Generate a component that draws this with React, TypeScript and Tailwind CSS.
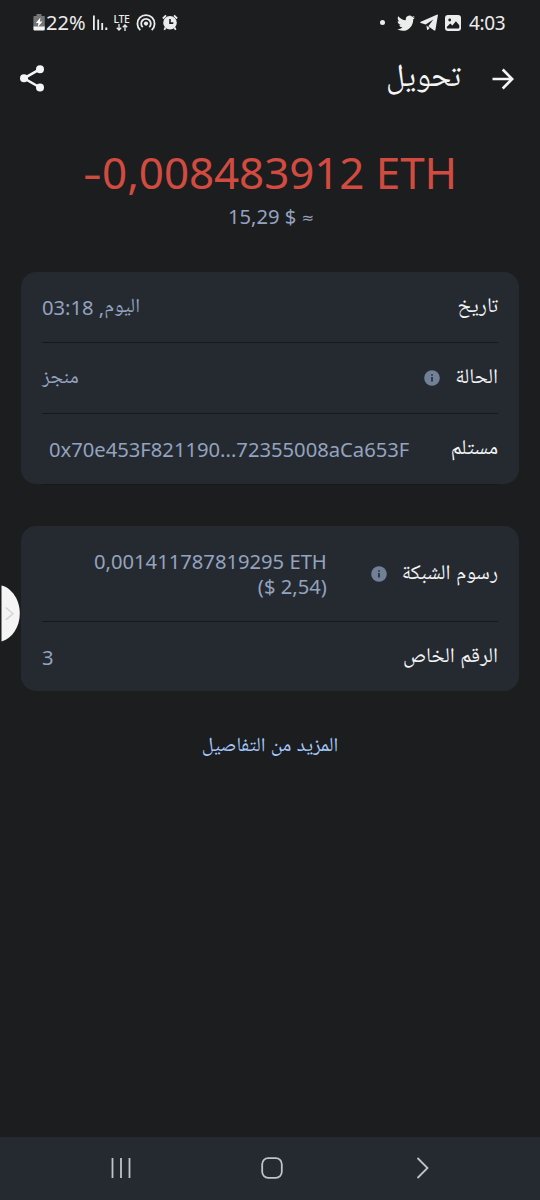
import type { ReactNode } from 'react';

function InfoIcon() {
  return (
    <svg width="16" height="16" viewBox="0 0 16 16" className="shrink-0">
      <circle cx="8" cy="8" r="7.8" fill="#718096" />
      <path d="M8 7v4.6M8 4.3v1.5" stroke="#252a31" strokeWidth="1.6" />
    </svg>
  );
}

function StatusBar() {
  return (
    <header dir="ltr" className="flex h-[45px] shrink-0 items-center justify-between pl-[33px] pr-[34px] text-[#ececec]">
      <div className="flex items-center">
        <svg width="12" height="17" viewBox="0 0 12 17">
          <path d="M3.5 0h5v2H11a.8.8 0 0 1 .8.8V13H.4V2.800A.8.8 0 0 1 1.200 2h2.300z" fill="#747576" />
          <path d="M.4 12.500h11.400v2.700A1.300 1.300 0 0 1 10.500 16.500H1.700A1.300 1.300 0 0 1 .4 15.200z" fill="#f4f4f4" />
          <path d="M7.400 3.600 2.900 9h2.500L4.900 13l4.600-5.500H6.900z" fill="#fff" />
        </svg>
        <span className="ml-[1px] w-[44px] whitespace-nowrap text-[20px] leading-6 tracking-[0.1px]">22%</span>
        <svg width="15" height="16" viewBox="0 0 15 16" className="ml-[3px]" fill="currentColor">
          <path d="M0 .5h1.800V15H0zM4.300 4.500h1.800V15H4.300zM8.300 8h1.800v7H8.300zM12.300 12.500h2V15h-2z" />
        </svg>
        <div className="ml-[5px] flex w-[17px] flex-col items-center">
          <span className="text-[10.500px] font-medium leading-[10px] tracking-[-0.4px]">LTE</span>
          <svg width="12" height="7" viewBox="0 0 12 7" fill="none" stroke="currentColor" strokeWidth="1.300">
            <path d="M3 0v6M.8 3.800 3 6l2.200-2.200M9 7V1M6.800 3.200 9 1l2.200 2.200" />
          </svg>
        </div>
        <svg width="20" height="18" viewBox="0 0 20 18" className="ml-[6px]" fill="none" stroke="currentColor" strokeWidth="1.800">
          <path d="M4.300 16.100A8.600 8.600 0 1 1 15.700 16.100" />
          <path d="M6.700 13.100A4.800 4.800 0 1 1 13.300 13.100" />
          <circle cx="10" cy="9.600" r="2.100" fill="currentColor" stroke="none" />
        </svg>
        <svg width="16" height="17" viewBox="0 0 16 17" className="ml-[6px]">
          <circle cx="8" cy="8.800" r="6.800" fill="currentColor" />
          <path d="M3.500 13.500 2.300 15.800M12.500 13.500l1.200 2.300M.9 4.500 4 1.300M15.100 4.500 12 1.300" stroke="currentColor" strokeWidth="1.800" />
          <path d="M8 5v4.100h3.300" fill="none" stroke="#1c1d1f" strokeWidth="1.600" />
        </svg>
      </div>
      <div className="flex items-center">
        <span className="mr-[12px] size-[5px] rounded-full bg-[#ececec]" />
        <svg width="18" height="16" viewBox="0 1.500 24 20.500" preserveAspectRatio="none" fill="currentColor">
          <path d="M23.953 4.570a10 10 0 0 1-2.825.775 4.958 4.958 0 0 0 2.163-2.723c-.951.555-2.005.959-3.127 1.184a4.920 4.920 0 0 0-8.384 4.482C7.690 8.095 4.067 6.130 1.640 3.162a4.822 4.822 0 0 0-.666 2.475c0 1.710.870 3.213 2.188 4.096a4.904 4.904 0 0 1-2.228-.616v.060a4.923 4.923 0 0 0 3.946 4.827 4.996 4.996 0 0 1-2.212.085 4.936 4.936 0 0 0 4.604 3.417 9.867 9.867 0 0 1-6.102 2.105c-.39 0-.779-.023-1.170-.067a13.995 13.995 0 0 0 7.557 2.209c9.053 0 13.998-7.496 13.998-13.985 0-.210 0-.420-.015-.630A9.935 9.935 0 0 0 24 4.590z" />
        </svg>
        <svg width="18" height="17" viewBox="0 0 18 17" className="ml-[5px]" fill="currentColor">
          <path d="M17.300.6c.4-.1.700.1.600.6l-2.500 14.700c-.1.700-.7.900-1.200.5L8.300 12.200l5-6.600-7.600 5L.8 9c-.8-.3-.8-.9 0-1.200zM6.400 11.600l3.300 2.400-1.700 1.700c-.4.400-.9.300-1-.3z" />
        </svg>
        <svg width="16" height="16" viewBox="0 0 16 16" className="ml-[7px]">
          <rect width="16" height="16" rx="3" fill="currentColor" />
          <circle cx="4.700" cy="5" r="1.400" fill="#1c1d1f" />
          <path d="m1.800 12 3.400-3.400 2.200 1.900 3.500-4.200 3.400 4v2c0 .8-.5 1.300-1.200 1.300H3c-.7 0-1.200-.6-1.200-1.200z" fill="#1c1d1f" />
        </svg>
        <span className="ml-[8px] w-[37px] whitespace-nowrap text-[19px] leading-6 tracking-[-0.4px]">4:03</span>
      </div>
    </header>
  );
}

function Row({ label, info, children, className }: { label: string; info?: boolean; children: ReactNode; className: string }) {
  return (
    <div className={`mx-[21px] flex items-center justify-between ${className}`}>
      <div className="flex items-center gap-[15px] whitespace-nowrap text-[#f3f4f6]">
        <span className="text-[21px]">{label}</span>
        {info && <InfoIcon />}
      </div>
      <div className="whitespace-nowrap text-[#94a3bf]">{children}</div>
    </div>
  );
}

export default function App() {
  return (
    <div dir="rtl" className="relative flex h-[1200px] w-[540px] flex-col overflow-hidden bg-[#1c1d1f] font-['Noto_Sans','Noto_Naskh_Arabic_UI','Noto_Naskh_Arabic','DejaVu_Sans',sans-serif] text-[20.2px] leading-6">
      <StatusBar />
      <div className="flex h-[66px] shrink-0 items-center justify-between pl-[20px] pr-[26px] text-[#f5f5f5]">
        <div className="flex items-center gap-[31px]">
          <svg width="22" height="22" viewBox="0 0 22 22" fill="none" stroke="currentColor" strokeWidth="2.600" className="translate-y-px">
            <path d="M.5 11h20M10.700 1.500 20.200 11l-9.500 9.500" />
          </svg>
          <h1 className="text-[32px] leading-9">تحويل</h1>
        </div>
        <svg width="25" height="27" viewBox="0 0 25 27" fill="currentColor">
          <path d="M20 4.200 4 13.300l16 9.200" fill="none" stroke="currentColor" strokeWidth="2.500" />
          <circle cx="20" cy="4.200" r="4" /><circle cx="4" cy="13.300" r="4" /><circle cx="20" cy="22.500" r="4" />
        </svg>
      </div>
      <section dir="ltr" className="flex h-[161px] shrink-0 flex-col items-center pt-[35px]">
        <div className="whitespace-nowrap text-[44px] leading-[52px] tracking-[-0.1px] text-[#d24b40]"><span className="mr-[5px] inline-block origin-left scale-x-[1.35]">-</span>0,008483912 ETH</div>
        <div className="mt-[6px] whitespace-nowrap pl-[2px] leading-6 text-[#94a3bf]">15,29 $ <span className="inline-block -translate-y-px text-[15px] font-medium">≈</span></div>
      </section>
      <main className="flex flex-col px-[21px]">
        <section className="h-[212px] rounded-[15px] bg-[#252a31]">
          <Row label="تاريخ" className="h-[71px] border-b border-[#15181c]"><span dir="rtl">اليوم, 03:18</span></Row>
          <Row label="الحالة" info className="h-[71px] border-b border-[#15181c]">منجز</Row>
          <Row label="مستلم" className="h-[71px] border-b border-[#15181c]"><span dir="ltr" className="ml-[7px] inline-block">0x70e453F821190...72355008aCa653F</span></Row>
        </section>
        <section className="mt-[42px] h-[165px] rounded-[15px] bg-[#252a31]">
          <Row label="رسوم الشبكة" info className="h-[96px] border-b border-[#15181c]">
            <div dir="ltr" className="ml-[52px] flex flex-col items-end leading-[25px]"><span>0,001411787819295 ETH</span><span>($ 2,54)</span></div>
          </Row>
          <Row label="الرقم الخاص" className="h-[69px]">3</Row>
        </section>
        <a className="mt-[44px] self-center whitespace-nowrap text-[20px] text-[#a4c8fa]">المزيد من التفاصيل</a>
      </main>
      <nav dir="ltr" className="mt-auto flex h-[63px] shrink-0 items-center justify-between bg-[#252a31] pb-[2px] pl-[110px] pr-[110px] text-[#bfc4cc]">
        <svg width="22" height="22" viewBox="0 0 22 22" stroke="currentColor" strokeWidth="1.800"><path d="M2.500 1v20M11 1v20M19.500 1v20" /></svg>
        <svg width="22" height="22" viewBox="0 0 22 22" fill="none" stroke="currentColor" strokeWidth="1.800" className="mr-[4px]"><rect x="1.200" y="1.200" width="19.600" height="19.600" rx="6" /></svg>
        <svg width="14" height="22" viewBox="0 0 14 22" fill="none" stroke="currentColor" strokeWidth="1.800"><path d="m1.500 1 10 10-10 10" /></svg>
      </nav>
      <svg width="22" height="60" viewBox="0 0 22 60" className="absolute left-0 top-[584px]">
        <path d="M1.500 1.500C12 4 19.800 16 19.800 29.500S12 54.500 1.500 57.500z" fill="#f5f5f5" />
        <path d="m5.700 23.500 7.300 6.200-7.300 6.200" fill="none" stroke="#d5d5d5" strokeWidth="1.500" />
      </svg>
    </div>
  );
}
